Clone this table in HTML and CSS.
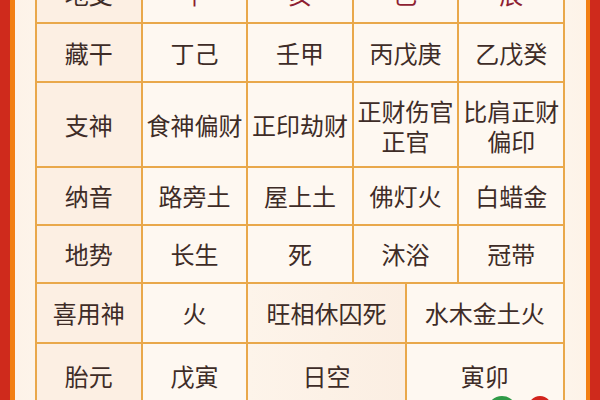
FILE: index.html
```html
<!DOCTYPE html>
<html lang="zh-CN">
<head>
<meta charset="utf-8">
<link rel="stylesheet" href="styles.css">
</head>
<body>
<div class="frame">
  <div class="inner">
    <div class="chart">
      <div class="cell label r-top">地支</div>
      <div class="cell red r-top">午</div>
      <div class="cell red r-top">亥</div>
      <div class="cell red r-top">巳</div>
      <div class="cell red r-top">辰</div>

      <div class="cell label">藏干</div>
      <div class="cell">丁己</div>
      <div class="cell">壬甲</div>
      <div class="cell">丙戊庚</div>
      <div class="cell">乙戊癸</div>

      <div class="cell label">支神</div>
      <div class="cell">食神偏财</div>
      <div class="cell">正印劫财</div>
      <div class="cell multi"><span>正财伤官</span><span>正官</span></div>
      <div class="cell multi"><span>比肩正财</span><span>偏印</span></div>

      <div class="cell label">纳音</div>
      <div class="cell">路旁土</div>
      <div class="cell">屋上土</div>
      <div class="cell">佛灯火</div>
      <div class="cell">白蜡金</div>

      <div class="cell label">地势</div>
      <div class="cell">长生</div>
      <div class="cell">死</div>
      <div class="cell">沐浴</div>
      <div class="cell">冠带</div>

      <div class="cell label">喜用神</div>
      <div class="cell">火</div>
      <div class="cell wide tint">旺相休囚死</div>
      <div class="cell wide">水木金土火</div>

      <div class="cell label">胎元</div>
      <div class="cell">戊寅</div>
      <div class="cell wide tint">日空</div>
      <div class="cell wide">寅卯</div>
    </div>
  </div>
  <span class="dot dot-green"></span>
  <span class="dot dot-red"></span>
</div>
</body>
</html>
```
FILE: styles.css
```css
html {
  background: linear-gradient(90deg, #cf2a1c 0, #cf2a1c 10px, #f27f12 10px, #f27f12 15px, #fdf6ee 15px, #fdf6ee 586px, #f27f12 586px, #f27f12 590px, #cf2a1c 590px);
}

html, body {
  margin: 0;
  padding: 0;
  width: 600px;
  height: 400px;
  overflow: hidden;
  font-family: "Noto Sans CJK SC", "Noto Sans", sans-serif;
}

.frame {
  position: relative;
  height: 400px;
  border-left: 10px solid #cf2a1c;
  border-right: 10px solid #cf2a1c;
  overflow: hidden;
}

.inner {
  display: flow-root;
  height: 400px;
  border-left: 5px solid #f27f12;
  border-right: 4px solid #f27f12;
  padding: 0 21px 0 20px;
  background: linear-gradient(90deg, #fdf3e8 0%, #fefaf5 20%, #fefaf5 80%, #fdf3e8 100%);
}

.chart {
  display: grid;
  grid-template-columns: repeat(10, 1fr);
  grid-template-rows: 57px 57px 83px 56px 56px 58px 64px;
  gap: 2px;
  padding: 2px;
  background: #e9a84b;
  margin-top: -37px;
  width: 526px;
}

.cell {
  grid-column: span 2;
  display: flex;
  align-items: center;
  justify-content: center;
  text-align: center;
  background: #fef8f1;
  color: #3e2c27;
  font-size: 24px;
  line-height: 30px;
  white-space: nowrap;
}

.label {
  background: #fcefe3;
}

.red {
  color: #8e1f32;
}

.wide {
  grid-column: span 3;
}

.tint {
  background: linear-gradient(90deg, #fdf4ea 0%, #fbeee2 100%);
}

.multi {
  flex-direction: column;
  padding-top: 2px;
}

.multi span {
  display: block;
  line-height: 30px;
}

.dot {
  position: absolute;
  top: 396px;
  width: 30px;
  height: 30px;
  border-radius: 50%;
}

.dot-green {
  left: 477px;
  background: #2f9a47;
}

.dot-red {
  left: 517px;
  width: 26px;
  background: #d2231c;
}
```
